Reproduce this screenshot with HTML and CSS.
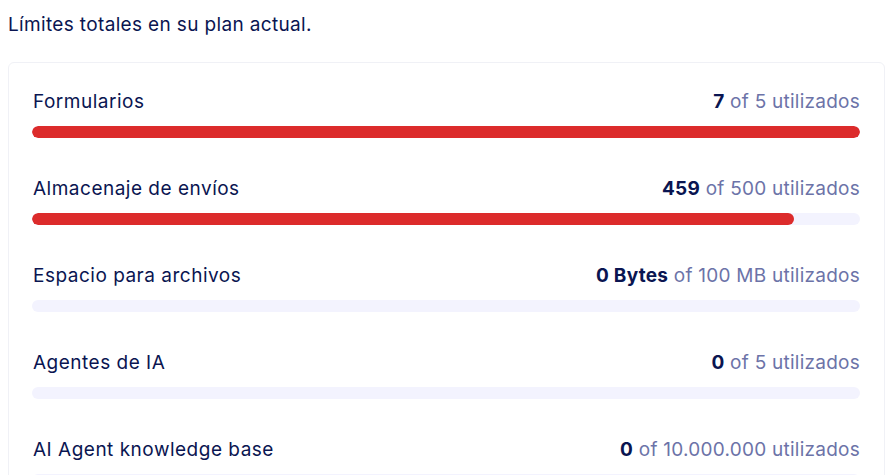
FILE: index.html
```html
<!DOCTYPE html>
<html lang="es">
<head>
<meta charset="utf-8">
<link rel="stylesheet" href="styles.css">
</head>
<body>
<p class="title">Límites totales en su plan actual.</p>
<div class="card">
  <div class="row">
    <div class="head"><span class="label">Formularios</span><span class="value"><b>7</b> of 5 utilizados</span></div>
    <div class="track"><div class="fill" style="width:100%"></div></div>
  </div>
  <div class="row">
    <div class="head"><span class="label">Almacenaje de envíos</span><span class="value"><b>459</b> of 500 utilizados</span></div>
    <div class="track"><div class="fill" style="width:92%"></div></div>
  </div>
  <div class="row">
    <div class="head"><span class="label">Espacio para archivos</span><span class="value"><b>0 Bytes</b> of 100 MB utilizados</span></div>
    <div class="track"><div class="fill" style="width:0%"></div></div>
  </div>
  <div class="row">
    <div class="head"><span class="label">Agentes de IA</span><span class="value"><b>0</b> of 5 utilizados</span></div>
    <div class="track"><div class="fill" style="width:0%"></div></div>
  </div>
  <div class="row">
    <div class="head"><span class="label">AI Agent knowledge base</span><span class="value"><b>0</b> of 10.000.000 utilizados</span></div>
    <div class="track"><div class="fill" style="width:0%"></div></div>
  </div>
</div>
</body>
</html>
```
FILE: styles.css
```css
html, body {
  background: #ffffff;
}
body {
  margin: 8px;
  font-family: "Inter", "Noto Sans", sans-serif;
  color: #0a1551;
  overflow: hidden;
}
.title {
  margin: 5px 0 25px;
  font-size: 19px;
  letter-spacing: 0.35px;
  line-height: 24px;
}
.card {
  margin-right: 2px;
  border: 1px solid #f0f1f6;
  border-radius: 6px;
  padding: 27px 24px 20px 23px;
  display: flex;
  flex-direction: column;
  gap: 39px;
}
.head {
  display: flex;
  justify-content: space-between;
  align-items: center;
  font-size: 19px;
  line-height: 24px;
  padding-left: 1px;
}
.label {
  letter-spacing: 0.5px;
}
.value {
  color: #6c73a8;
  letter-spacing: 0.25px;
}
.value b {
  color: #0a1551;
  font-weight: 700;
}
.track {
  margin-top: 12px;
  height: 12px;
  border-radius: 6px;
  background: #f3f3fe;
  overflow: hidden;
}
.fill {
  height: 100%;
  border-radius: 6px;
  background: #dc2b2b;
}
```
